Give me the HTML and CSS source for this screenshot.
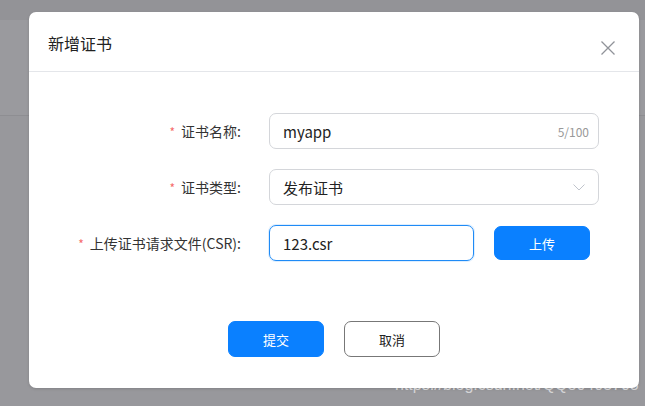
FILE: index.html
```html
<!DOCTYPE html>
<html lang="zh">
<head>
<meta charset="utf-8">
<link rel="stylesheet" href="styles.css">
</head>
<body>
<div class="page">
  <div class="page-top"></div>
  <div class="page-band"></div>
</div>
<div class="mask">
  <div class="dialog">
    <div class="dialog-header">
      <span class="dialog-title">新增证书</span>
      <button class="close" aria-label="close">
        <svg width="14" height="14" viewBox="0 0 14 14"><path d="M0.5 0.5 L13.5 13.5 M13.5 0.5 L0.5 13.5" stroke="#909399" stroke-width="1.3" fill="none"/></svg>
      </button>
    </div>
    <div class="dialog-body">
      <div class="form-row">
        <label class="form-label"><span class="req">*</span>证书名称:</label>
        <div class="input wide">
          <span class="value">myapp</span>
          <span class="count">5/100</span>
        </div>
      </div>
      <div class="form-row">
        <label class="form-label"><span class="req">*</span>证书类型:</label>
        <div class="input wide">
          <span class="value">发布证书</span>
          <svg class="arrow" width="12" height="7" viewBox="0 0 12 7"><path d="M0.5 0.5 L6 6 L11.5 0.5" stroke="#c0c4cc" stroke-width="1" fill="none"/></svg>
        </div>
      </div>
      <div class="form-row">
        <label class="form-label"><span class="req">*</span>上传证书请求文件(CSR):</label>
        <div class="input narrow focus">
          <span class="value">123.csr</span>
        </div>
        <button class="btn primary upload">上传</button>
      </div>
    </div>
    <div class="dialog-footer">
      <button class="btn primary">提交</button>
      <button class="btn plain">取消</button>
    </div>
  </div>
  <div class="watermark">https://blog.csdn.net/QQ80405708</div>
</div>
</body>
</html>
```
FILE: styles.css
```css
html, body {
  margin: 0;
  padding: 0;
}
body {
  width: 645px;
  height: 406px;
  overflow: hidden;
  background: #98989c;
  font-family: "Noto Sans CJK SC", "Noto Sans", sans-serif;
  position: relative;
}
.page {
  height: 406px;
}
.page-top {
  height: 20px;
  background: #939397;
}
.page-band {
  height: 95px;
  background: #9a9a9e;
  border-bottom: 1px solid #8e8e92;
}
.mask {
  position: absolute;
  inset: 0;
}
.dialog {
  position: absolute;
  left: 29px;
  top: 12px;
  width: 610px;
  height: 376px;
  background: #fff;
  border-radius: 7px;
  box-shadow: 0 1px 3px rgba(0,0,0,0.15);
  display: flex;
  flex-direction: column;
}
.dialog-header {
  height: 59px;
  border-bottom: 1px solid #e4e6ea;
  display: flex;
  align-items: flex-start;
  justify-content: space-between;
  padding: 0 24px 0 19px;
}
.dialog-title {
  font-size: 16px;
  line-height: 22px;
  color: #222;
  margin-top: 20px;
}
.close {
  border: 0;
  background: none;
  padding: 0;
  margin-top: 29px;
  width: 14px;
  height: 14px;
  display: flex;
}
.dialog-body {
  padding-top: 41px;
  display: flex;
  flex-direction: column;
  gap: 20px;
}
.form-row {
  display: flex;
  align-items: center;
  height: 36px;
}
.form-label {
  width: 240px;
  text-align: right;
  font-size: 14px;
  color: #333;
  padding-right: 28px;
  box-sizing: border-box;
  white-space: nowrap;
}
.req {
  color: #f56c6c;
  font-size: 12px;
  margin-right: 6px;
}
.input {
  height: 36px;
  box-sizing: border-box;
  border: 1px solid #d4d6da;
  border-radius: 7px;
  display: flex;
  align-items: center;
  padding: 0 9px 0 13px;
}
.input.wide {
  width: 330px;
  justify-content: space-between;
}
.input.narrow {
  width: 205px;
}
.input.focus {
  border-color: #1f8bf6;
  box-shadow: 0 0 0 1px rgba(31,139,246,0.15);
}
.value {
  font-size: 15px;
  color: #222;
}
.count {
  font-size: 12px;
  color: #999;
}
.arrow {
  margin-right: 4px;
}
.btn {
  width: 96px;
  height: 36px;
  border-radius: 7px;
  font-size: 13px;
  font-family: "Noto Sans CJK SC", "Noto Sans", sans-serif;
  cursor: pointer;
  box-sizing: border-box;
}
.btn.primary {
  background: #0a80ff;
  border: 1px solid #0a80ff;
  color: #fff;
}
.btn.plain {
  background: #fff;
  border: 1px solid #777;
  color: #222;
}
.upload {
  margin-left: 20px;
  height: 34px;
}
.dialog-footer {
  margin-top: 60px;
  padding-left: 199px;
  display: flex;
  gap: 20px;
}
.watermark {
  position: absolute;
  left: 395px;
  top: 376px;
  font-family: "Liberation Sans", Arial, sans-serif;
  font-size: 16px;
  color: rgba(255,255,255,0.6);
  white-space: nowrap;
}
```
